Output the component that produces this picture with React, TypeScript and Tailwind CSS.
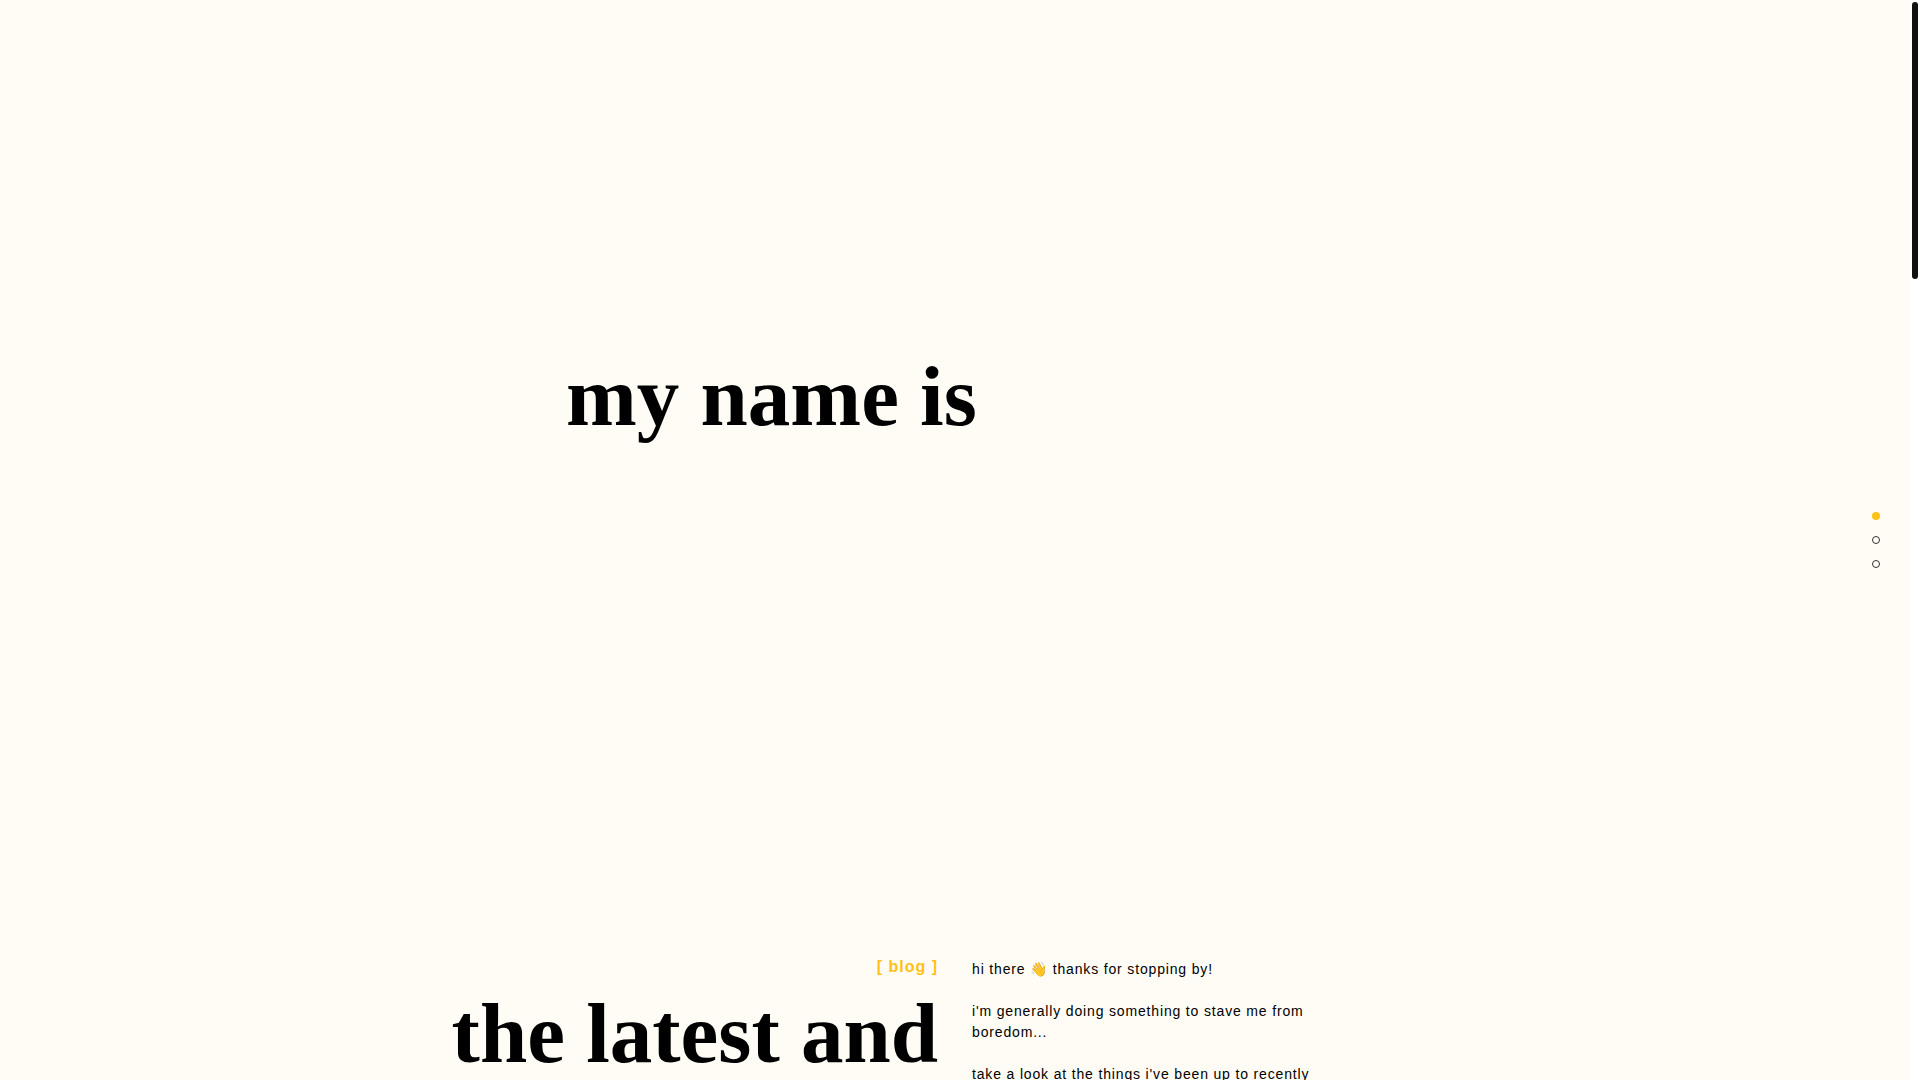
const sections = [
  { id: 'home', label: 'home', active: true },
  { id: 'blog', label: 'blog', active: false },
  { id: 'contact', label: 'contact', active: false },
]

function SectionNav() {
  return (
    <nav className="absolute right-[30px] top-1/2 -translate-y-1/2 flex flex-col gap-4">
      {sections.map((section) => (
        <a
          key={section.id}
          href={`#${section.id}`}
          aria-label={section.label}
          className={
            section.active
              ? 'block size-2 rounded-full bg-[#ffc116]'
              : 'block size-2 rounded-full border border-[#333333]'
          }
        />
      ))}
    </nav>
  )
}

function Scrollbar() {
  return (
    <div className="w-[10px] shrink-0 bg-white p-[2px]">
      <div className="h-[277px] w-[6px] rounded-full bg-[#111111]" />
    </div>
  )
}

export default function App() {
  return (
    <div className="flex h-screen overflow-hidden bg-[#fffcf5] text-black font-['Liberation_Sans',Arial,sans-serif]">
      <div className="relative flex-1 overflow-hidden">
        <section id="home" className="h-[88vh] pt-[350px]">
          <div className="mx-auto max-w-[778px]">
            <h1 className="font-['Liberation_Serif',serif] text-[85px] leading-[92px] font-bold">my name is</h1>
          </div>
        </section>

        <section id="blog" className="mx-auto grid max-w-[1100px] grid-cols-2 gap-[34px] pt-[5px]">
          <div className="text-right">
            <p className="text-base font-bold tracking-[1px] text-[#ffc116]">[ blog ]</p>
            <h2 className="mt-2 font-['Liberation_Serif',serif] text-[85px] leading-[92px] font-bold">the latest and</h2>
          </div>

          <div className="max-w-[360px] pt-1 text-sm leading-[21px] tracking-[0.06em] space-y-[21px]">
            <p>hi there 👋 thanks for stopping by!</p>
            <p>i'm generally doing something to stave me from boredom...</p>
            <p>take a look at the things i've been up to recently</p>
          </div>
        </section>

        <SectionNav />
      </div>
      <Scrollbar />
    </div>
  )
}
